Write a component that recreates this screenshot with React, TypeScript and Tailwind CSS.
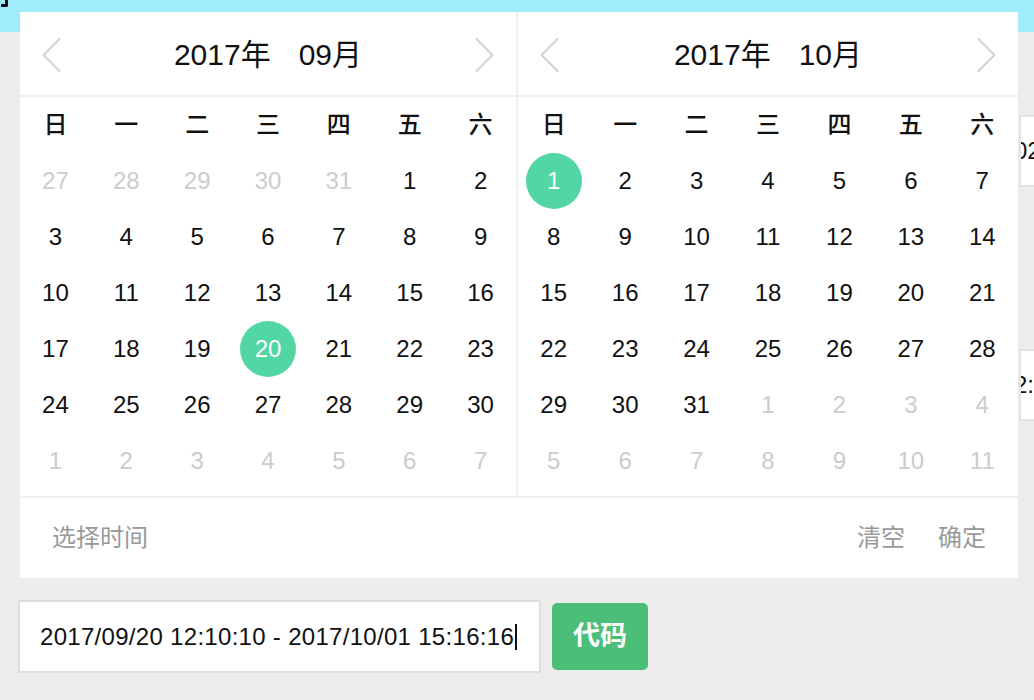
import { type ReactNode } from 'react'

type Day = { n: number, muted?: boolean, active?: boolean }

const WEEKDAYS = ['日', '一', '二', '三', '四', '五', '六']

function range(from: number, to: number, extra: Partial<Day> = {}): Day[] {
  const out: Day[] = []
  for (let i = from; i <= to; i++) out.push({ n: i, ...extra })
  return out
}

const SEPTEMBER: Day[] = [
  ...range(27, 31, { muted: true }),
  ...range(1, 30).map((d) => (d.n === 20 ? { ...d, active: true } : d)),
  ...range(1, 7, { muted: true }),
]

const OCTOBER: Day[] = [
  ...range(1, 31).map((d) => (d.n === 1 ? { ...d, active: true } : d)),
  ...range(1, 11, { muted: true }),
]

function Chevron({ dir }: { dir: 'left' | 'right' }) {
  return (
    <svg width="19" height="34" viewBox="0 0 19 34" fill="none" aria-hidden="true">
      <polyline
        points={dir === 'left' ? '17.5,1 1.5,17 17.5,33' : '1.5,1 17.5,17 1.5,33'}
        stroke="#d2d2d2"
        strokeWidth="2"
        strokeLinecap="round"
        strokeLinejoin="round"
      />
    </svg>
  )
}

function MonthHeader({ year, month }: { year: string, month: string }) {
  return (
    <div className="flex h-[85px] items-center justify-between border-b-2 border-[#efefef] px-[22px] pt-[2px]">
      <Chevron dir="left" />
      <div className="flex items-center gap-[28px] text-[30px] text-[#111]">
        <span>{year}</span>
        <span>{month}</span>
      </div>
      <Chevron dir="right" />
    </div>
  )
}

function MonthGrid({ days }: { days: Day[] }) {
  return (
    <div className="grid grid-cols-7 pb-[7px]">
      {WEEKDAYS.map((w) => (
        <div key={w} className="flex h-[56px] items-center justify-center text-[24px] font-medium text-[#111]">
          {w}
        </div>
      ))}
      {days.map((d, i) => (
        <div key={i} className="flex h-[56px] items-center justify-center">
          {d.active ? (
            <span className="flex h-[56px] w-[56px] items-center justify-center rounded-full bg-[#52d6a4] text-[24px] text-white">
              {d.n}
            </span>
          ) : (
            <span className={d.muted ? 'text-[24px] text-[#cccccc]' : 'text-[24px] text-[#111]'}>{d.n}</span>
          )}
        </div>
      ))}
    </div>
  )
}

function Month({ year, month, days, children }: { year: string, month: string, days: Day[], children?: ReactNode }) {
  return (
    <div className="flex flex-col">
      <MonthHeader year={year} month={month} />
      <MonthGrid days={days} />
      {children}
    </div>
  )
}

function SideField({ text }: { text: string }) {
  return (
    <div className="ml-[1019px] flex h-[72px] w-[300px] items-center overflow-hidden border-2 border-r-0 border-[#e2e2e2] bg-white">
      <span className="-ml-[7px] text-[24px] text-[#111]">{text}</span>
    </div>
  )
}

export default function App() {
  return (
    <div
      className="relative h-[700px] w-full overflow-hidden bg-[#ececec]"
      style={{ fontFamily: '"Liberation Sans", "Noto Sans CJK SC", sans-serif' }}
    >
      <div className="relative h-[32px] bg-[#a0ecfc]">
        <div className="absolute left-[1px] top-0 h-[7px] w-[7px] rounded-br-[2px] border-b-[3px] border-r-[3px] border-[#111]" />
      </div>

      <div className="mt-[83px]">
        <SideField text="02" />
      </div>
      <div className="mt-[162px]">
        <SideField text="2:" />
      </div>

      <div className="mt-[179px] flex items-center pl-[18px]">
        <div className="flex h-[73px] w-[523px] items-center border-2 border-[#dddddd] bg-white pl-[20px]">
          <span className="text-[24px] tracking-[0.3px] text-[#111]">2017/09/20 12:10:10 - 2017/10/01 15:16:16</span>
          <span className="ml-[1px] h-[26px] w-[2px] bg-[#111]" />
        </div>
        <button
          type="button"
          className="ml-[11px] flex h-[67px] w-[96px] items-center justify-center rounded-[5px] bg-[#4bbf79] text-[27px] font-semibold text-white"
        >
          代码
        </button>
      </div>

      <div className="absolute left-[20px] top-[12px] flex w-[998px] flex-col bg-white">
        <div className="flex">
          <div className="w-[498px] border-r-2 border-[#efefef]">
            <Month year="2017年" month="09月" days={SEPTEMBER} />
          </div>
          <div className="flex-1">
            <Month year="2017年" month="10月" days={OCTOBER} />
          </div>
        </div>
        <div className="flex h-[82px] items-center justify-between border-t-2 border-[#efefef] px-[32px] text-[24px] text-[#999]">
          <span>选择时间</span>
          <div className="flex items-center gap-[33px]">
            <span>清空</span>
            <span>确定</span>
          </div>
        </div>
      </div>
    </div>
  )
}
